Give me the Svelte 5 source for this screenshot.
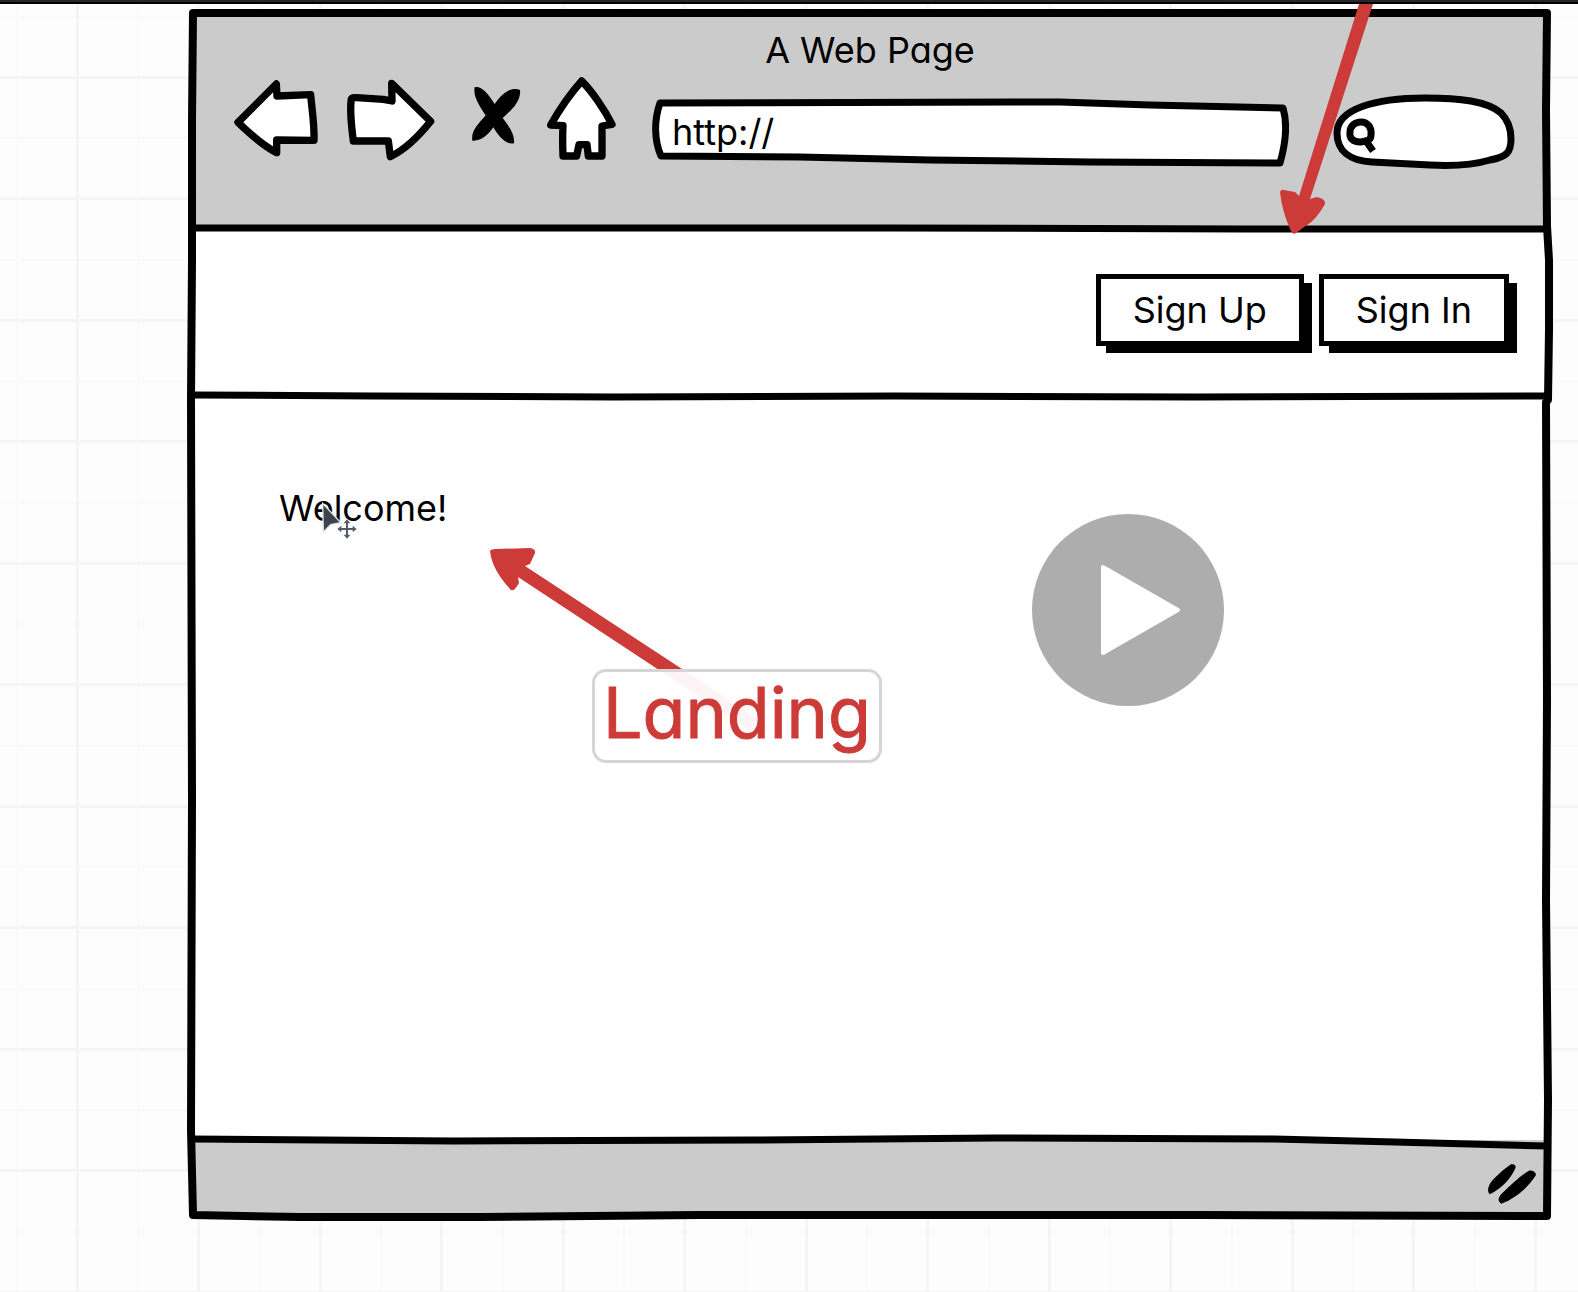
<script>
  let url = $state('http://');
  let query = $state('');
</script>

<div class="page">
  <svg class="grid" aria-hidden="true">
    <defs>
      <pattern id="cells" width="243" height="243" patternUnits="userSpaceOnUse">
        <g fill="#fafafa">
          <rect x="16" width="2" height="243" /><rect x="137" width="2" height="243" />
          <rect y="16" width="243" height="2" /><rect y="137" width="243" height="2" />
        </g>
        <g fill="#f5f5f5">
          <rect x="76" width="3" height="243" /><rect x="197" width="3" height="243" />
          <rect y="76" width="243" height="3" /><rect y="197" width="243" height="3" />
        </g>
      </pattern>
    </defs>
    <rect width="100%" height="100%" fill="url(#cells)" />
  </svg>
  <div class="edge"></div>

  <main class="window">
    <header class="chrome">
      <h1>A Web Page</h1>
      <div class="toolbar">
        <button class="tool back" aria-label="Back">
          <svg viewBox="162 231 252 252"><path class="shape" d="M174 367 L289 252 L291 288 L392 284 C396 330 404 380 402 421 L290 420 L290 458 C250 438 208 400 174 367Z" /></svg>
        </button>
        <button class="tool forward" aria-label="Forward">
          <svg viewBox="498 231 264 252"><path class="shape" d="M514 297 C516 291 522 293 530 293 L610 298 L636 303 L635 250 L752 364 C720 404 674 450 631 470 L625 423 L520 423 C516 390 508 335 514 297Z" /></svg>
        </button>
        <button class="tool stop" aria-label="Stop">
          <svg viewBox="846 231 168 252"><path d="M884 262 C903 257 924 280 944 312 C970 272 1000 260 1020 270 C1024 305 990 334 968 354 C988 380 1005 405 1002 430 C975 436 952 402 940 382 C925 404 904 424 877 422 C872 390 898 370 917 346 C902 322 878 290 884 262Z" /></svg>
        </button>
        <button class="tool home" aria-label="Home">
          <svg viewBox="1098 231 234 252"><path class="shape" d="M1205 243 C1235 272 1274 330 1296 373 L1266 378 L1266 468 L1225 468 L1221 434 L1197 434 L1190 468 L1149 468 C1148 440 1147 410 1149 377 L1112 375 C1142 322 1172 280 1205 243Z" /></svg>
        </button>
        <div class="address">
          <svg class="sketch" viewBox="652 94 637 76" preserveAspectRatio="none" aria-hidden="true">
            <path d="M660 103 L1060 102 L1150 105 L1283 108 C1288 125 1286 142 1280 163 L1090 162 L930 160 L800 157 L661 156 C654 140 654 120 660 103Z" />
          </svg>
          <input type="text" aria-label="Address" bind:value={url} />
        </div>
        <div class="search">
          <svg class="sketch" viewBox="1333 94 183 76" aria-hidden="true">
            <path d="M1337 133 C1337 109 1375 98 1425 98 C1460 98 1487 101 1501 113 C1508 120 1511 129 1511 139 C1511 152 1507 157 1490 160 C1470 166 1450 166 1430 165 L1372 162 C1350 161 1337 151 1337 133Z" />
            <path d="M1361 122 C1368 122 1372 128 1371 135 C1371 141 1366 141 1360 142 C1353 142 1349 138 1350 132 C1350 126 1355 122 1361 122Z M1366 141 L1373 151" />
          </svg>
          <input type="search" aria-label="Search" bind:value={query} />
        </div>
      </div>
      <svg class="rule" viewBox="0 0 1352 12" preserveAspectRatio="none" aria-hidden="true"><path d="M0 6 L300 6 L700 6 L1050 7 L1352 7" /></svg>
    </header>

    <nav class="bar">
      <button class="action">Sign Up</button>
      <button class="action">Sign In</button>
      <svg class="rule" viewBox="0 0 1352 12" preserveAspectRatio="none" aria-hidden="true"><path d="M0 5 L180 6 L420 7 L700 6 L1000 7 L1352 6" /></svg>
    </nav>

    <section class="content">
      <p>Welcome!</p>
      <svg class="rule" viewBox="0 0 1352 12" preserveAspectRatio="none" aria-hidden="true"><path d="M0 5 L260 7 L560 6 L800 4 L1080 5 L1200 8 L1352 12" /></svg>
    </section>

    <footer class="status">
      <svg class="grip" viewBox="326 250 150 126" aria-hidden="true">
        <path d="M398 254 C408 252 414 256 411 266 C398 296 370 328 334 344 C324 334 330 314 346 298 C364 280 380 266 398 254Z M452 273 C462 271 472 276 473 286 C450 322 414 356 369 372 C358 366 358 354 370 342 C398 316 424 290 452 273Z" />
      </svg>
    </footer>

    <svg class="frame" viewBox="188 8 1364 1214" preserveAspectRatio="none" aria-hidden="true">
      <path d="M193 13 L1547 13 L1546 110 L1547 226 L1549 260 L1549 330 L1548 400 L1546 402 L1547 700 L1546 900 L1548 1100 L1547 1216 L1200 1215 L700 1215 L480 1217 L300 1217 L193 1215 L191 1130 L192 800 L191 400 L192 260 L192 120Z" />
    </svg>
  </main>

  <button class="play" aria-label="Play">
    <svg viewBox="0 0 192 192"><path d="M71 53 L146 96 L71 139Z" /></svg>
  </button>

  <svg class="arrows" width="1400" height="800" aria-hidden="true">
    <path d="M1359 4 L1373 4 L1310 199 L1317 197 Q1326 199 1325 204 Q1316 220 1307 225 L1296 233 Q1293 235 1291 231 Q1282 212 1280 192 Q1281 189 1284 190 L1295 192 L1299 196Z" />
    <path d="M490 551 Q491 549 496 549 L530 548 Q536 549 535 553 L530 564 L525 566 L766 724 L759 736 L518 577 L519 583 Q514 592 511 590 Q492 570 490 551Z" />
  </svg>
  <div class="note">Landing</div>

  <svg class="cursor" viewBox="420 360 114 120" aria-hidden="true">
    <path class="pointer" d="M428 370 L482 428 L452 434 L430 456Z" />
    <path class="halo" d="M501 425 V470 M478 447 H524" />
    <path class="move" d="M501 428 V466 M482 447 H520" />
    <path class="tips" d="M501 418 L511 430 H491Z M501 476 L511 464 H491Z M472 447 L484 437 V457Z M530 447 L518 437 V457Z" />
  </svg>
</div>

<style>
  :global(body) {
    background: #fdfdfd;
  }

  .page {
    position: relative;
    display: flex;
    box-sizing: border-box;
    min-height: 100vh;
    padding: 8px 26px 70px 188px;
    overflow: hidden;
    color: #000;
    font-family: Inter, Lato, sans-serif;
    font-feature-settings: "cv11";
    font-size: 36px;
    line-height: 44px;
  }

  svg {
    display: block;
  }

  .grid,
  .frame,
  .sketch {
    position: absolute;
    inset: 0;
    width: 100%;
    height: 100%;
  }

  .edge {
    position: absolute;
    inset: 0 0 auto;
    height: 2px;
    background: #24282c;
    border-bottom: 2px solid #000;
  }

  .window {
    position: relative;
    display: flex;
    flex: 1;
    flex-direction: column;
    padding: 5px;
    background: #fff;
    background-clip: content-box;
  }

  .frame,
  .rule {
    fill: none;
    stroke: #000;
    stroke-width: 7px;
    stroke-linejoin: round;
    pointer-events: none;
    overflow: visible;
  }

  .frame {
    stroke-width: 8px;
  }

  .rule {
    position: absolute;
    left: 0;
    bottom: -6px;
    z-index: 1;
    width: 100%;
    height: 12px;
  }

  .chrome,
  .bar,
  .content {
    position: relative;
  }

  .chrome {
    height: 215px;
    background: #cbcbcb;
  }

  h1 {
    margin: 0;
    padding-top: 15px;
    font-size: 36px;
    font-weight: 400;
    line-height: 44px;
    text-align: center;
  }

  .toolbar {
    display: flex;
    gap: 28px;
    padding: 5px 31px 0 41px;
  }

  button {
    padding: 0;
    border: 0;
    background: none;
    color: inherit;
    font: inherit;
    font-feature-settings: inherit;
    cursor: pointer;
  }

  .tool {
    height: 84px;
  }

  .tool svg {
    width: 100%;
    height: 100%;
    overflow: visible;
  }

  .back {
    width: 84px;
  }

  .forward {
    width: 88px;
  }

  .stop {
    width: 56px;
  }

  .home {
    width: 78px;
  }

  .shape {
    fill: #fff;
    stroke: #000;
    stroke-width: 22px;
    stroke-linejoin: round;
  }

  .address,
  .search {
    position: relative;
    height: 76px;
    margin-top: 17px;
  }

  .address {
    flex: 1;
    margin-right: 16px;
  }

  .search {
    width: 183px;
  }

  .sketch {
    fill: #fff;
    stroke: #000;
    stroke-width: 7px;
    stroke-linejoin: round;
  }

  input {
    position: relative;
    box-sizing: border-box;
    width: 100%;
    height: 100%;
    padding: 0 20px;
    border: 0;
    outline: 0;
    background: none;
    color: inherit;
    font: inherit;
    appearance: none;
  }

  .search input {
    padding-left: 48px;
  }

  .bar {
    display: flex;
    justify-content: flex-end;
    align-items: center;
    gap: 15px;
    height: 164px;
    padding-right: 38px;
    padding-bottom: 4px;
  }

  .action {
    box-sizing: border-box;
    height: 72px;
    padding: 0 32px;
    border: 5px solid #000;
    background: #fff;
    box-shadow: 9px 8px 0 -1px #000;
  }

  .content {
    flex: 1;
  }

  p {
    margin: 0;
    padding: 90px 86px;
  }

  .status {
    display: flex;
    justify-content: flex-end;
    align-items: flex-end;
    box-sizing: border-box;
    height: 77px;
    padding: 0 10px 12px 0;
    background: #cbcbcb;
  }

  .grip {
    width: 50px;
    height: 42px;
  }

  .play {
    position: absolute;
    top: 514px;
    left: 1032px;
    width: 192px;
    height: 192px;
    border-radius: 50%;
    background: #adadad;
  }

  .play path {
    fill: #fff;
    stroke: #fff;
    stroke-width: 4px;
    stroke-linejoin: round;
  }

  .arrows {
    position: absolute;
    top: 0;
    left: 0;
    z-index: 2;
    fill: #cc3b38;
    pointer-events: none;
  }

  .note {
    position: absolute;
    top: 669px;
    left: 592px;
    z-index: 2;
    box-sizing: border-box;
    padding: 0 8px 6px;
    border: 3px solid #d5d5d5;
    border-radius: 14px;
    background: rgb(255 255 255 / 95%);
    color: #cc3b38;
    font-size: 70px;
    line-height: 82px;
    -webkit-text-stroke: 1px #cc3b38;
  }

  .cursor {
    position: absolute;
    top: 500px;
    left: 320px;
    width: 38px;
    height: 40px;
  }

  .pointer {
    fill: #3d434d;
    stroke: #e4e5e8;
    stroke-width: 4px;
  }

  .halo {
    stroke: #fff;
    stroke-width: 14px;
  }

  .move {
    stroke: #555b66;
    stroke-width: 6px;
  }

  .tips {
    fill: #555b66;
  }
</style>
